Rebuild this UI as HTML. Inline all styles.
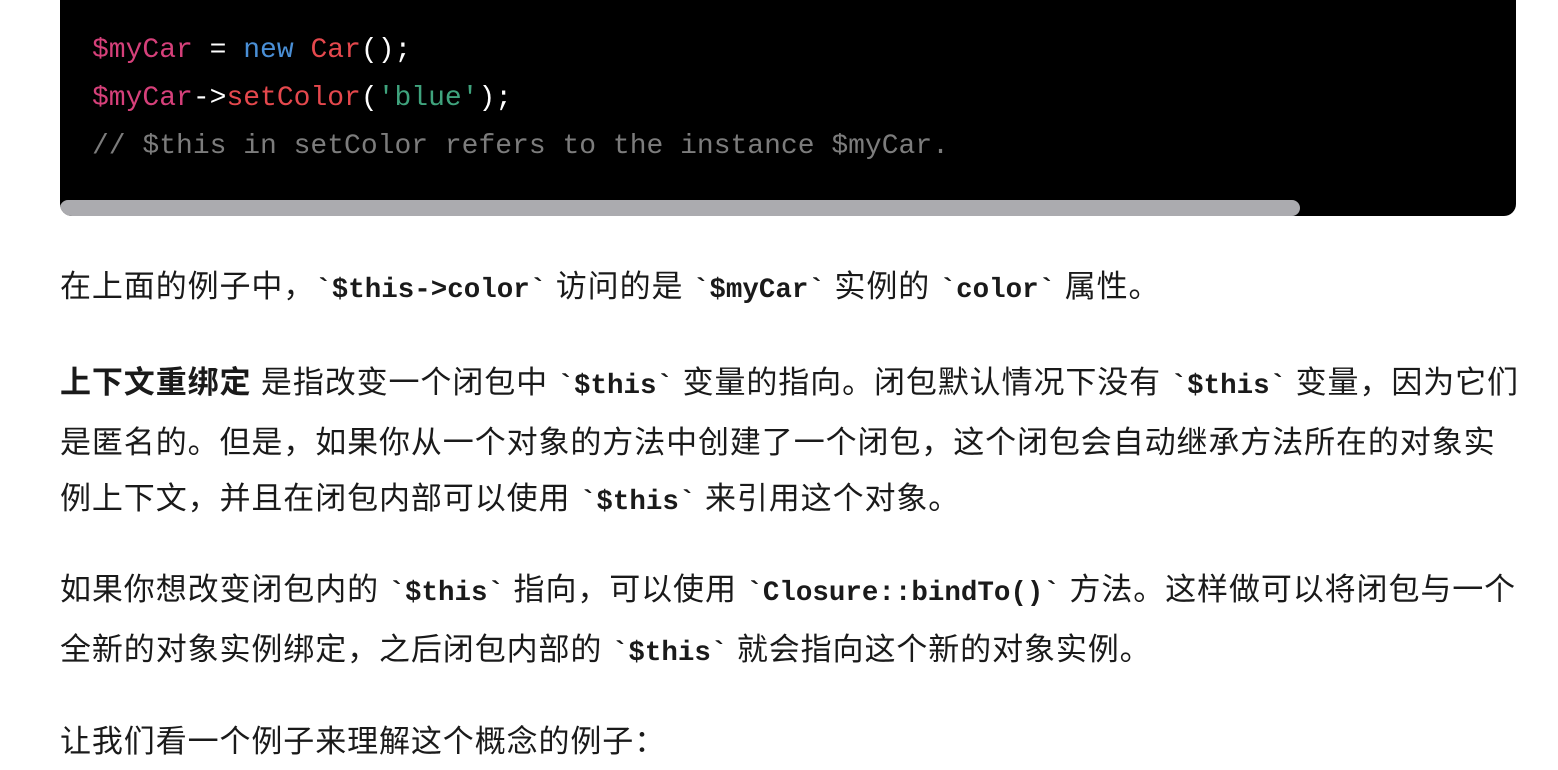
<!DOCTYPE html>
<html><head><meta charset="utf-8"><style>
html,body{margin:0;padding:0;background:#fff;width:1558px;height:728px;overflow:hidden}
.pre{position:absolute;left:60px;top:-20px;width:1456px;height:236px;background:#000;border-radius:0 0 12px 12px;overflow:hidden}
.code{position:absolute;left:32px;top:47px;font-family:"Liberation Mono",monospace;font-size:28px;line-height:48px;color:#fff;white-space:pre}
.v{color:#d6407a}.k{color:#4a8fd6}.f{color:#e5484d}.s{color:#3fa37d}.c{color:#7c7c7c}
.sb{position:absolute;left:0;top:220px;width:1240px;height:16px;background:#ababaf;border-radius:8px}
.p{position:absolute;left:60px;width:1500px;font-family:"Liberation Sans","Noto Sans CJK SC",sans-serif;font-size:31px;letter-spacing:0.9px;line-height:56px;color:#1a1a1a;white-space:nowrap}
code{font-family:"Liberation Mono",monospace;font-weight:bold;font-size:27.5px;letter-spacing:0}
b{font-weight:bold}
</style></head><body>
<div class="pre"><div class="code"><span class="v">$myCar</span> = <span class="k">new</span> <span class="f">Car</span>();
<span class="v">$myCar</span>-&gt;<span class="f">setColor</span>(<span class="s">'blue'</span>);
<span class="c">// $this in setColor refers to the instance $myCar.</span></div><div class="sb"></div></div>
<div class="p" style="top:259px">在上面的例子中，<code>`$this-&gt;color`</code> 访问的是 <code>`$myCar`</code> 实例的 <code>`color`</code> 属性。</div>
<div class="p" style="top:355px"><b>上下文重绑定</b> 是指改变一个闭包中 <code>`$this`</code> 变量的指向。闭包默认情况下没有 <code>`$this`</code> 变量，因为它们<br>是匿名的。但是，如果你从一个对象的方法中创建了一个闭包，这个闭包会自动继承方法所在的对象实<br>例上下文，并且在闭包内部可以使用 <code>`$this`</code> 来引用这个对象。</div>
<div class="p" style="top:562px">如果你想改变闭包内的 <code>`$this`</code> 指向，可以使用 <code>`Closure::bindTo()`</code> 方法。这样做可以将闭包与一个<br>全新的对象实例绑定，之后闭包内部的 <code>`$this`</code> 就会指向这个新的对象实例。</div>
<div class="p" style="top:714px">让我们看一个例子来理解这个概念的例子：</div>
</body></html>
